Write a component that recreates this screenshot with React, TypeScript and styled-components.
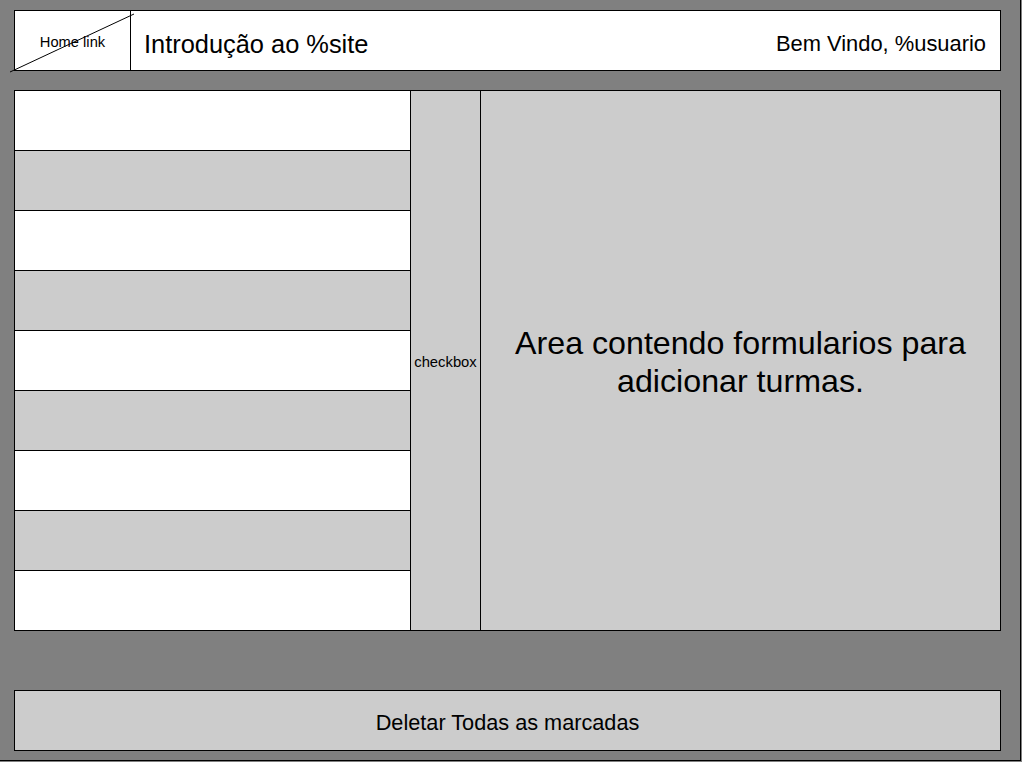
import React from "react";
import styled, { createGlobalStyle } from "styled-components";

const Global = createGlobalStyle`
  html, body { margin: 0; padding: 0; background: #808080; }
  * { box-sizing: border-box; }
  body { font-family: "Liberation Sans", Arial, sans-serif; color: #000; }
`;

const Frame = styled.div`
  width: 1021px;
  height: 761px;
  background: #808080;
  border-right: 1px solid #000;
  border-bottom: 1px solid #000;
  padding: 10px 0 0 14px;
  display: flex;
  flex-direction: column;
`;

const Header = styled.header`
  width: 987px;
  height: 61px;
  background: #fff;
  border: 1px solid #000;
  display: flex;
  align-items: center;
`;

const HomeCell = styled.a`
  position: relative;
  width: 116px;
  height: 100%;
  border-right: 1px solid #000;
  display: flex;
  align-items: center;
  justify-content: center;
  font-size: 14.7px;
  color: #000;
  text-decoration: none;
  padding-top: 2px;
`;

const Diagonal = styled.svg`
  position: absolute;
  left: -5px;
  top: 1px;
  width: 125px;
  height: 61px;
  overflow: visible;
  pointer-events: none;
`;

const Title = styled.h1`
  margin: 0 0 0 13px;
  font-size: 25.4px;
  font-weight: normal;
  flex: 1;
  padding-top: 8px;
`;

const Welcome = styled.span`
  font-size: 21.9px;
  margin-right: 14px;
  padding-top: 6px;
`;

const Main = styled.main`
  margin-top: 19px;
  width: 987px;
  height: 541px;
  border: 1px solid #000;
  display: flex;
`;

const List = styled.ul`
  margin: 0;
  padding: 0;
  list-style: none;
  width: 396px;
  border-right: 1px solid #000;
  display: flex;
  flex-direction: column;
`;

const Row = styled.li<{ $shade: boolean }>`
  height: 59px;
  background: ${(p) => (p.$shade ? "#cccccc" : "#ffffff")};
  & + & {
    border-top: 1px solid #000;
    height: 60px;
  }
`;

const CheckCol = styled.div`
  width: 70px;
  border-right: 1px solid #000;
  background: #cccccc;
  display: flex;
  align-items: center;
  justify-content: center;
  font-size: 14.8px;
  padding-top: 2px;
`;

const FormArea = styled.section`
  flex: 1;
  background: #cccccc;
  display: flex;
  align-items: center;
  justify-content: center;
  text-align: center;
  font-size: 32.2px;
  line-height: 38px;
  padding: 2px 10px 0;
`;

const Footer = styled.button`
  margin-top: 59px;
  width: 987px;
  height: 61px;
  border: 1px solid #000;
  background: #cccccc;
  font-family: "Liberation Sans", Arial, sans-serif;
  font-size: 21.7px;
  color: #000;
  padding: 5px 0 0;
  cursor: pointer;
`;

export default function App() {
  const rows = Array.from({ length: 9 }, (_, i) => i);
  return (
    <>
      <Global />
      <Frame>
        <Header>
          <HomeCell href="#">
            Home link
            <Diagonal viewBox="0 0 125 61">
              <line x1="0" y1="60" x2="124" y2="2" stroke="#000" strokeWidth="1" />
            </Diagonal>
          </HomeCell>
          <Title>Introdução ao %site</Title>
          <Welcome>Bem Vindo, %usuario</Welcome>
        </Header>
        <Main>
          <List>
            {rows.map((i) => (
              <Row key={i} $shade={i % 2 === 1} />
            ))}
          </List>
          <CheckCol>checkbox</CheckCol>
          <FormArea>
            Area contendo formularios para
            <br />
            adicionar turmas.
          </FormArea>
        </Main>
        <Footer>Deletar Todas as marcadas</Footer>
      </Frame>
    </>
  );
}
